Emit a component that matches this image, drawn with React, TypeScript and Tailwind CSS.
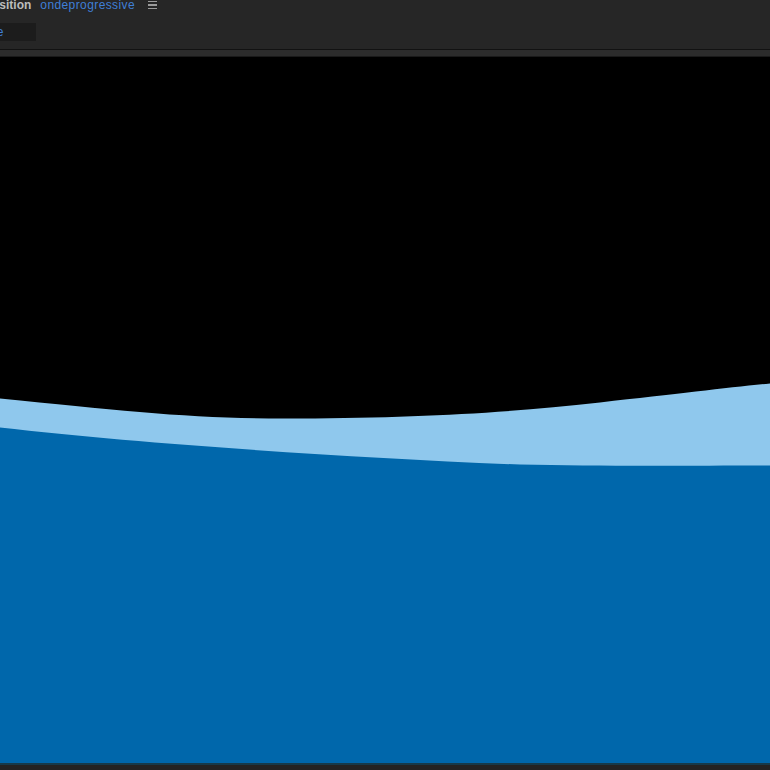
import React from "react";

export default function App() {
  return (
    <div
      className="w-[770px] h-[770px] flex flex-col bg-black overflow-hidden"
      style={{ fontFamily: '"Liberation Sans", Arial, sans-serif' }}
    >
      {/* panel header */}
      <header className="h-[49px] shrink-0 bg-[#262626] overflow-hidden">
        <div className="flex items-center h-[12px] -mt-[1px] text-[12px] leading-none">
          <span className="-ml-[42px] font-bold text-[#bdbdbd]">Composition</span>
          <span className="ml-[9px] tracking-[0.4px] text-[#3f7fd6]">ondeprogressive</span>
          <span className="ml-[13px] flex flex-col gap-[2px] w-[9px]">
            <span className="h-[1.5px] bg-[#9a9a9a]" />
            <span className="h-[1.5px] bg-[#9a9a9a]" />
            <span className="h-[1.5px] bg-[#9a9a9a]" />
          </span>
        </div>
        <div className="mt-[12px] flex">
          <div className="w-[36px] h-[18px] bg-[#1c1c1c] flex items-center overflow-hidden">
            <span className="-ml-[30px] text-[12px] leading-none text-[#3f7fd6]">ondee</span>
          </div>
        </div>
      </header>
      <div className="h-[1px] shrink-0 bg-[#121212]" />
      <div className="h-[7px] shrink-0 bg-[#2c2c2c] border-b border-[#1a1a1a]" />

      {/* viewer */}
      <main className="flex-1 bg-black">
        <svg className="block w-full h-full" viewBox="0 58 770 705" preserveAspectRatio="none">
          <path
            d="M0,399 C130,412 200,420 300,419 C420,418 500,414 600,403 C680,394 730,388 770,384 L770,763 L0,763 Z"
            fill="#8fc8ed"
          />
          <path
            d="M0,428 C150,445 350,458 520,465 C600,467 700,466 770,466 L770,763 L0,763 Z"
            fill="#0067ab"
          />
        </svg>
      </main>
      <div className="h-[2px] shrink-0 bg-[#173a4a]" />
      <div className="h-[5px] shrink-0 bg-[#232323]" />
    </div>
  );
}
